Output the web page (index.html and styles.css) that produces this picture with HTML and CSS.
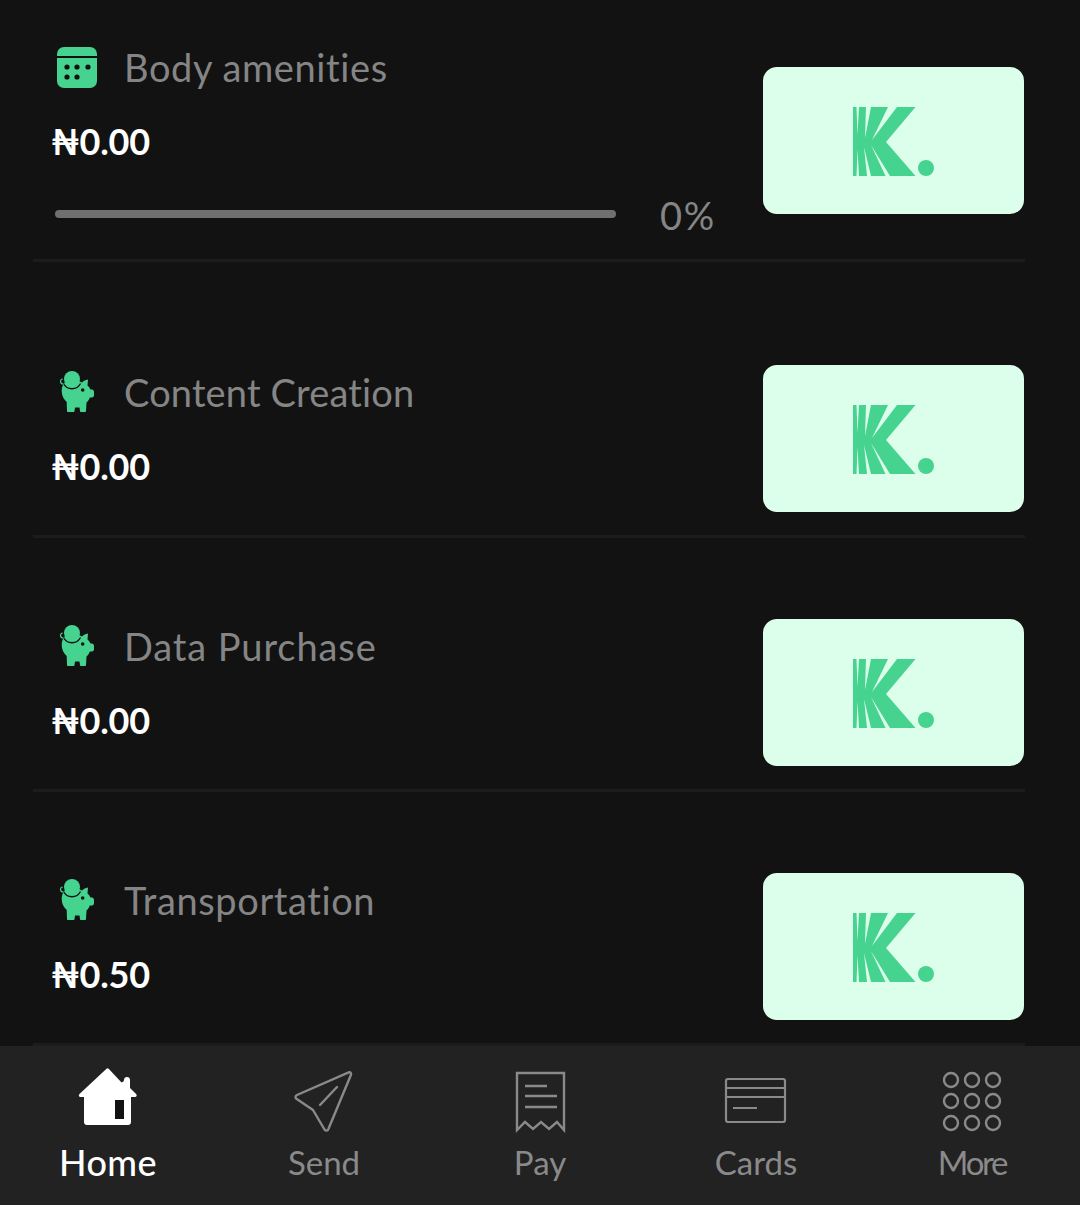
FILE: index.html
```html
<!DOCTYPE html>
<html lang="en">
<head>
<meta charset="utf-8">
<title>Savings</title>
<link rel="stylesheet" href="styles.css">
</head>
<body>
<svg class="defs" width="0" height="0" aria-hidden="true">
  <defs>
    <symbol id="k-logo" viewBox="0 0 81 69">
      <path d="M0 0H62.500L33 35 62.500 69H0z" fill="#46d38f"/>
      <path d="M3.500 0H6L4.500 28zM13 0H18L12 31zM35 0H44L19 33zM3.500 69H6L4.500 42zM14 69H18L11 40zM32.500 69H37L18 38z" fill="#dbffeb"/>
      <circle cx="73" cy="61" r="8" fill="#46d38f"/>
    </symbol>
    <symbol id="pig" viewBox="0 0 35 41">
      <path d="M14 7C7 8 2.700 13.500 2.700 20c0 4.500 2 8.500 5 11l.3 9c0 .5.300 1 1 1h5.500c.5 0 1-.3 1-1l.5-3.500h4.500l.5 3.500c0 .7.500 1 1 1h4c.7 0 1-.5 1-1l.5-8.500c1.500-1.300 2.700-3 3.300-5H33c1.300 0 2-1 2-2.500v-3c0-1.500-1-2.500-2-2.500h-1.500c-.7-1.700-1.700-3-3-4l.5-6c-2.500.3-4.500 1.500-6 3-2.700-1.700-5.500-2.500-9-2.500z" fill="#46d38f"/>
      <circle cx="23.700" cy="19" r="1.800" fill="#121212"/>
      <path d="M4.500 12.500a9.500 9.500 0 0 0 17 0" fill="none" stroke="#121212" stroke-width="1.300"/>
      <circle cx="13" cy="8" r="8" fill="#46d38f"/>
      <path d="M4.500 13.200a3 3 0 0 1-3-2.700c0-1.300 1-2.300 2.200-2.500" fill="none" stroke="#46d38f" stroke-width="1.200"/>
    </symbol>
  </defs>
</svg>

<main class="list">
  <section class="row row-first">
    <div class="info">
      <div class="head">
        <svg class="icon" viewBox="0 0 40 41" aria-hidden="true">
          <rect width="40" height="41" rx="7" fill="#46d38f"/>
          <rect y="9" width="40" height="2" fill="#121212"/>
          <g fill="#121212"><circle cx="10" cy="20" r="2.600"/><circle cx="20" cy="20" r="2.600"/><circle cx="31" cy="20" r="2.600"/><circle cx="10" cy="30" r="2.600"/><circle cx="20" cy="30" r="2.600"/></g>
        </svg>
        <span class="name">Body amenities</span>
      </div>
      <div class="amount">₦0.00</div>
      <div class="progress"><div class="track"></div><span class="pct">0%</span></div>
    </div>
    <div class="card"><svg class="logo"><use href="#k-logo"/></svg></div>
  </section>

  <section class="row">
    <div class="info">
      <div class="head"><svg class="icon pig"><use href="#pig"/></svg><span class="name name-tight">Content Creation</span></div>
      <div class="amount">₦0.00</div>
    </div>
    <div class="card"><svg class="logo"><use href="#k-logo"/></svg></div>
  </section>

  <section class="row">
    <div class="info">
      <div class="head"><svg class="icon pig"><use href="#pig"/></svg><span class="name name-wide">Data Purchase</span></div>
      <div class="amount">₦0.00</div>
    </div>
    <div class="card"><svg class="logo"><use href="#k-logo"/></svg></div>
  </section>

  <section class="row">
    <div class="info">
      <div class="head"><svg class="icon pig"><use href="#pig"/></svg><span class="name">Transportation</span></div>
      <div class="amount">₦0.50</div>
    </div>
    <div class="card"><svg class="logo"><use href="#k-logo"/></svg></div>
  </section>
</main>

<nav class="nav">
  <a class="tab tab-active">
    <svg class="tab-icon" viewBox="0 0 64 64" aria-hidden="true">
      <path d="M30.500.8 3.500 26c-1.300 1.300-.6 3 1 3H8V54c0 1.700 1.200 3 3 3H52c1.800 0 3-1.300 3-3V29h4c1.600 0 2.300-1.700 1.100-3L54 20V12c0-1.800-1.200-3-3-3s-3 1.200-3 3l-.5 1.500-2 1L32.700.8c-.7-.7-1.500-.7-2.200 0z" fill="#fff"/>
      <rect x="39" y="32" width="9" height="19" fill="#121212"/>
    </svg>
    <span>Home</span>
  </a>
  <a class="tab">
    <svg class="tab-icon" viewBox="0 0 64 64" aria-hidden="true" fill="none" stroke="#8a8a8a" stroke-width="2.400" stroke-linejoin="round" stroke-linecap="round">
      <path d="M59 5.500c-.3-1.100-1.300-1.600-2.300-1.100L5 27c-1.900 1-1.900 2.800-.6 3.800L21 42l11.500 19.500c1.300 1.700 3 1.500 3.800-.3L58.900 7c.2-.5.200-1 .1-1.500z"/>
      <path d="M45 19 28 37"/>
    </svg>
    <span>Send</span>
  </a>
  <a class="tab">
    <svg class="tab-icon" viewBox="0 0 64 64" aria-hidden="true" fill="none" stroke="#8a8a8a" stroke-width="2.400">
      <path d="M9 62V5H56V62L49 54 41 61 33 54 25 61 17 54z"/>
      <path d="M17 18H39M17 28H49M17 39H49"/>
    </svg>
    <span>Pay</span>
  </a>
  <a class="tab">
    <svg class="tab-icon" viewBox="0 0 64 64" aria-hidden="true" fill="none" stroke="#8a8a8a" stroke-width="2.200">
      <rect x="2" y="11" width="59" height="43" rx="2"/>
      <path d="M2 20H61M2 29H61M9 40H33"/>
    </svg>
    <span>Cards</span>
  </a>
  <a class="tab tab-more">
    <svg class="tab-icon" viewBox="0 0 64 64" aria-hidden="true" fill="none" stroke="#8a8a8a" stroke-width="2.400">
      <circle cx="11" cy="12" r="7"/><circle cx="32" cy="12" r="7"/><circle cx="53" cy="12" r="7"/>
      <circle cx="11" cy="33" r="7"/><circle cx="32" cy="33" r="7"/><circle cx="53" cy="33" r="7"/>
      <circle cx="11" cy="55" r="7"/><circle cx="32" cy="55" r="7"/><circle cx="53" cy="55" r="7"/>
    </svg>
    <span>More</span>
  </a>
</nav>
</body>
</html>
```

FILE: styles.css
```css
* { box-sizing: border-box; }
html, body { margin: 0; padding: 0; }
body {
  width: 1080px;
  height: 1205px;
  overflow: hidden;
  display: flex;
  flex-direction: column;
  background: #121212;
  font-family: "Lato", "Noto Sans", sans-serif;
}
.defs { position: absolute; }
.list { flex: 1; padding: 0 55px 0 33px; min-height: 0; }
.row {
  display: flex;
  justify-content: space-between;
  align-items: flex-start;
  height: 254px;
  padding: 81px 1px 0 20px;
  border-bottom: 3px solid #1c1c1c;
}
.row-first { height: 262px; padding-top: 47px; }
.row:nth-child(2) { height: 276px; padding-top: 103px; }
.row-first .card { margin-top: 20px; }
.info { width: 663px; padding-top: 7px; }
.row-first .info { padding-top: 0; }
.head { display: flex; align-items: center; height: 41px; margin-left: 4px; }
.icon { width: 40px; height: 41px; flex: none; }
.pig { width: 35px; margin: -2px 3px 0 2px; }
.name { margin-left: 27px; font-size: 38px; line-height: 41px; color: #858585; letter-spacing: .6px; }
.name-tight { letter-spacing: .15px; }
.name-wide { letter-spacing: .9px; }
.amount { margin-top: 31px; margin-left: -2px; font-size: 36px; line-height: 44px; font-weight: 700; color: #fff; letter-spacing: -.2px; }
.progress { display: flex; align-items: center; margin-top: 28px; margin-left: 2px; }
.track { width: 561px; height: 8px; border-radius: 4px; background: #707070; }
.pct { margin-left: 44px; margin-top: 2px; font-size: 38px; line-height: 44px; color: #858585; letter-spacing: 1.6px; }
.card {
  display: flex;
  width: 261px;
  height: 147px;
  flex: none;
  align-items: center;
  justify-content: center;
  padding-top: 2px;
  border-radius: 14px;
  background: #dbffeb;
}
.logo { width: 81px; height: 69px; }
.nav {
  display: grid;
  flex: none;
  grid-template-columns: repeat(5, 216px);
  height: 159px;
  background: #222;
}
.tab {
  display: flex;
  flex-direction: column;
  align-items: center;
  padding-top: 22px;
  color: #8a8a8a;
  font-size: 33px;
  line-height: 44px;
}
.tab-icon { width: 64px; height: 64px; overflow: visible; margin-bottom: 8px; }
.tab-active { color: #fff; font-size: 36px; font-weight: 500; letter-spacing: .4px; }
.tab-more span { letter-spacing: -2.300px; }
```
